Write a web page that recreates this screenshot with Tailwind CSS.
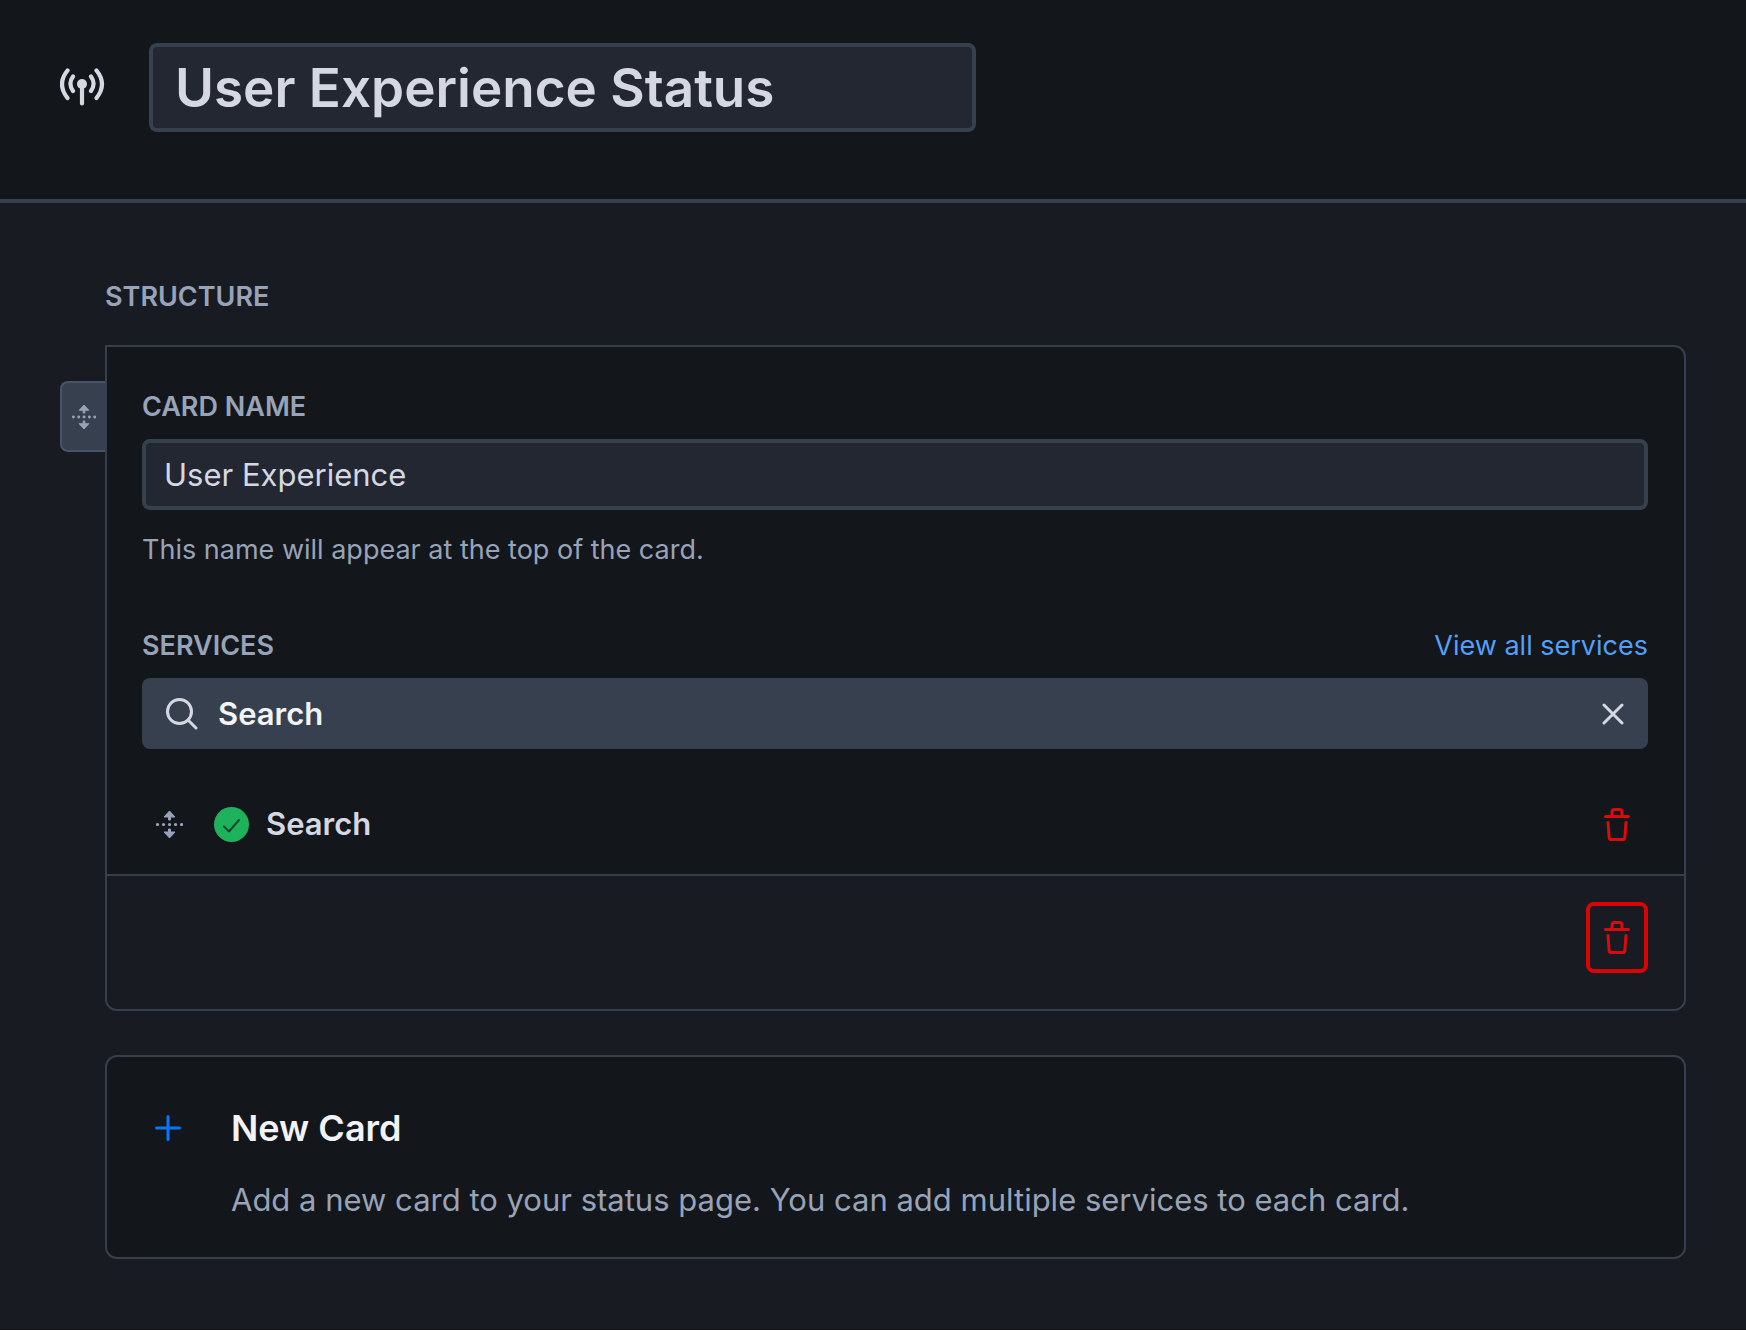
<!DOCTYPE html>
<html lang="en">
<head>
  <meta charset="UTF-8" />
  <meta name="viewport" content="width=device-width, initial-scale=1.0" />
  <title>User Experience Status</title>
  <script src="https://cdn.jsdelivr.net/npm/@tailwindcss/browser@4"></script>
</head>
<body class="bg-[#181b22] text-[#d5d8e2] min-h-screen border-b border-[#120f16] font-[Inter,sans-serif]">

  <!-- Icons -->
  <svg class="hidden">
    <symbol id="icon-drag" viewBox="0 0 27 29">
      <path d="M13.5 1 19 7h-4.500v3h-2V7H8zM13.5 28 8 22h4.500v-3h2v3H19z" fill="currentColor" stroke="currentColor" stroke-linejoin="round" />
      <path d="M1.500 14.500h24.100" fill="none" stroke="currentColor" stroke-width="3.200" stroke-linecap="round" stroke-dasharray="0.1 5.9" />
    </symbol>
    <symbol id="icon-trash" viewBox="0 0 26 34">
      <path d="M1.500 8.500h23M8 8V4Q8 1.500 10.500 1.500h5Q18 1.500 18 4V8M4 14.500l1.200 15.500Q5.400 31.500 7 31.500h12q1.600 0 1.800-1.500L22 14.500" fill="none" stroke="currentColor" stroke-width="3" stroke-linecap="round" stroke-linejoin="round" />
    </symbol>
  </svg>

  <!-- Header -->
  <header class="flex items-center gap-11 bg-[#13161a] border-b-4 border-[#37414e] pt-[43px] pb-[67px] px-[60px]">
    <svg class="w-[45px] h-[45px] shrink-0" viewBox="0 0 45 45" fill="none" stroke="currentColor" stroke-width="4.200" stroke-linecap="round">
      <circle cx="22" cy="19" r="5" fill="currentColor" stroke="none" />
      <path d="M22 20v18.500M13 11.500q-5.200 7 0 14.500M31 11.500q5.200 7 0 14.500M7.500 5.500q-11 13.500 0 27.500M36.500 5.500q11 13.500 0 27.500" />
    </svg>
    <input type="text" aria-label="Page title" value="User Experience Status" class="w-full max-w-[827px] h-[89px] px-[22px] bg-[#232731] border-4 border-[#37414e] rounded-lg text-[53px] font-semibold outline-none" />
  </header>

  <main class="pt-[78px] pb-[69px] pl-[105px] pr-[60px]">
    <h2 class="text-[27px] leading-8 font-semibold text-[#97a3b8]">STRUCTURE</h2>

    <!-- Card -->
    <section class="relative mt-8 bg-[#13161a] border-2 border-[#35404c] rounded-xl rounded-tl-none">
      <button type="button" aria-label="Move card" class="absolute -left-[47px] top-[34px] w-[45px] h-[71px] flex items-center justify-center bg-[#37404e] border-2 border-r-0 border-[#465567] rounded-l-lg text-[#97a3b8]">
        <svg class="w-6 h-[26px]"><use href="#icon-drag" /></svg>
      </button>

      <div class="pl-[35px] pr-9 pt-11 pb-[14px]">
        <label for="card-name" class="block text-[27px] leading-8 font-semibold text-[#97a3b8]">CARD NAME</label>
        <input id="card-name" type="text" value="User Experience" class="mt-4 block w-full h-[71px] px-[18px] bg-[#232731] border-4 border-[#37414e] rounded-lg text-[31px] outline-none" />
        <p class="mt-6 text-[27px] leading-8 text-[#97a3b8]">This name will appear at the top of the card.</p>

        <div class="mt-16 flex justify-between text-[27px] leading-8">
          <label for="service-search" class="font-semibold text-[#97a3b8]">SERVICES</label>
          <a href="#" class="text-[#549ff9]">View all services</a>
        </div>
        <div class="mt-4 h-[71px] pl-6 pr-6 flex items-center gap-5 bg-[#37404e] rounded-lg">
          <svg class="w-8 h-8 shrink-0" viewBox="0 0 32 32" fill="none" stroke="currentColor" stroke-width="3" stroke-linecap="round">
            <circle cx="13.500" cy="13.500" r="12" />
            <path d="m22 22 8 8" />
          </svg>
          <input id="service-search" type="text" value="Search" class="grow h-full text-[31px] font-semibold text-[#f1f3f7] outline-none" />
          <button type="button" aria-label="Clear search">
            <svg class="w-[22px] h-[22px]" viewBox="0 0 22 22" fill="none" stroke="currentColor" stroke-width="3" stroke-linecap="round"><path d="m2 2 18 18M20 2 2 20" /></svg>
          </button>
        </div>

        <div class="mt-10 h-[71px] pl-[14px] flex items-center">
          <svg class="w-[27px] h-[29px] text-[#97a3b8]"><use href="#icon-drag" /></svg>
          <svg class="ml-[31px] w-[35px] h-[35px]" viewBox="0 0 35 35" fill="none">
            <circle cx="17.500" cy="17.500" r="17.500" fill="#1eb25c" />
            <path d="m10 19.500 5 5L25 13" stroke="#10482b" stroke-width="2" stroke-linecap="round" stroke-linejoin="round" />
          </svg>
          <span class="ml-[17px] text-[31px] font-semibold">Search</span>
          <button type="button" aria-label="Remove service" class="ml-auto w-[62px] h-[71px] flex items-center justify-center text-[#da0b0b]">
            <svg class="w-[26px] h-[34px]"><use href="#icon-trash" /></svg>
          </button>
        </div>
      </div>

      <div class="flex justify-end bg-[#181b22] border-t-2 border-[#35404c] rounded-b-xl px-9 pt-[26px] pb-9">
        <button type="button" aria-label="Delete card" class="w-[62px] h-[71px] flex items-center justify-center border-4 border-[#da0404] rounded-lg text-[#da0b0b]">
          <svg class="w-[26px] h-[34px]"><use href="#icon-trash" /></svg>
        </button>
      </div>
    </section>

    <!-- New card -->
    <button type="button" class="mt-11 w-full flex items-start text-left bg-[#13161a] border-2 border-[#35404c] rounded-xl pl-12 pr-9 pt-[51px] pb-[37px]">
      <svg class="mt-[7px] w-[26px] h-[26px] shrink-0" viewBox="0 0 26 26" fill="none" stroke="#0a74fb" stroke-width="3" stroke-linecap="round"><path d="M13 1.500v23M1.500 13h23" /></svg>
      <span class="ml-[50px]">
        <span class="block text-[36px] leading-10 font-semibold text-[#f1f3f7]">New Card</span>
        <span class="mt-8 block text-[31px] leading-10 text-[#97a3b8]">Add a new card to your status page. You can add multiple services to each card.</span>
      </span>
    </button>
  </main>

</body>
</html>
